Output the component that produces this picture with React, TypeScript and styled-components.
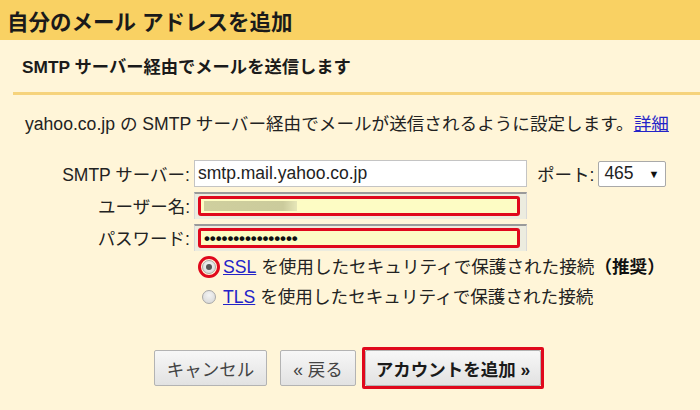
import React from "react";
import styled, { createGlobalStyle } from "styled-components";

const Global = createGlobalStyle`
  html, body { margin: 0; padding: 0; }
  body {
    width: 700px;
    height: 410px;
    overflow: hidden;
    background: #fff5d8;
    font-family: "Liberation Sans", Arial, "Noto Sans CJK JP", sans-serif;
    color: #222;
  }
`;

const Page = styled.div`
  width: 700px;
  height: 410px;
  display: flex;
  flex-direction: column;
  background: #fff5d8;
`;

const TitleBar = styled.div`
  height: 40px;
  background: #f9d163;
  display: flex;
  align-items: center;
  padding-left: 7px;
  font-size: 21.5px;
  font-weight: bold;
  color: #1a1a1a;
`;

const Section = styled.div`
  margin-left: 13px;
  height: 50px;
  border-bottom: 3px solid #f6d37c;
  display: flex;
  align-items: center;
  padding-left: 9px;
  padding-bottom: 2px;
  font-size: 17.3px;
  font-weight: bold;
  color: #1a1a1a;
`;

const Intro = styled.p`
  margin: 19px 0 0 25px;
  font-size: 17.6px;
  line-height: 20px;
  color: #222;
`;

const Link = styled.a`
  color: #2323c8;
  text-decoration: underline;
  cursor: pointer;
`;

const Form = styled.div`
  margin: 26px 0 0 25px;
  display: grid;
  grid-template-columns: 165px 333px auto;
  column-gap: 4px;
  row-gap: 5px;
  align-items: center;
`;

const Label = styled.label`
  text-align: right;
  font-size: 17.5px;
  color: #222;
  white-space: nowrap;
`;

const TextBox = styled.div`
  box-sizing: border-box;
  height: 27px;
  background: #fff;
  border: 1px solid #c4c4c4;
  display: flex;
  align-items: center;
  padding-left: 3px;
  font-size: 17.5px;
  color: #222;
`;

const FilledBox = styled.div`
  box-sizing: border-box;
  height: 27px;
  background: #ececdf;
  border-top: 2px solid #9a9a9a;
  border-left: 1px solid #d8d8d8;
  border-right: 1px solid #d8d8d8;
  padding: 2px 6px 3px 3px;
  display: flex;
`;

const Marked = styled.div`
  flex: 1;
  box-sizing: border-box;
  border: 3px solid #e0081c;
  border-radius: 3px;
  background: #fdfcc4;
  display: flex;
  align-items: center;
  padding-left: 3px;
`;

const Blurred = styled.span<{ $w: number }>`
  display: block;
  width: ${(p) => p.$w}px;
  height: 10px;
  background: linear-gradient(90deg, #cfcf9e, #cbcb9c 85%, #e6e6b8);
  filter: blur(0.4px);
`;

const Dots = styled.span`
  font-size: 17px;
  font-weight: bold;
  letter-spacing: -0.1px;
  color: #111;
  line-height: 1;
`;

const Port = styled.div`
  display: flex;
  align-items: center;
  gap: 4px;
  margin-left: 6px;
  font-size: 17.5px;
  color: #222;
`;

const Select = styled.div`
  box-sizing: border-box;
  height: 26px;
  width: 68px;
  border: 1px solid #a9a9a9;
  border-radius: 2px;
  background: #fff;
  display: flex;
  align-items: center;
  justify-content: space-between;
  padding: 0 6px 0 5px;
  font-size: 17.5px;
  color: #222;
`;

const Caret = styled.span`
  font-size: 11px;
  color: #111;
`;

const Options = styled.div`
  grid-column: 2 / 4;
  margin-top: 0;
  display: flex;
  flex-direction: column;
  gap: 8px;
`;

const Option = styled.div`
  height: 22px;
  line-height: 22px;
  display: flex;
  align-items: center;
  font-size: 17.6px;
  color: #222;
  white-space: nowrap;
`;

const RadioSlot = styled.span<{ $ring?: boolean }>`
  box-sizing: border-box;
  width: 22px;
  height: 22px;
  margin: 0 3px 0 4px;
  border-radius: 50%;
  border: 3px solid ${(p) => (p.$ring ? "#e0081c" : "transparent")};
  display: flex;
  align-items: center;
  justify-content: center;
`;

const Radio = styled.span<{ $on?: boolean }>`
  box-sizing: border-box;
  width: 14px;
  height: 14px;
  border-radius: 50%;
  border: 1px solid #a8a8a8;
  background: radial-gradient(circle at 50% 35%, #f4f4f4, #d4d4d4);
  display: flex;
  align-items: center;
  justify-content: center;
  &::after {
    content: "";
    display: ${(p) => (p.$on ? "block" : "none")};
    width: 6px;
    height: 6px;
    border-radius: 50%;
    background: #555;
  }
`;

const Strong = styled.b`
  font-weight: bold;
  color: #111;
`;

const Buttons = styled.div`
  margin-top: 39px;
  display: flex;
  justify-content: center;
  align-items: center;
  padding-right: 2px;
`;

const Button = styled.button<{ $primary?: boolean }>`
  box-sizing: border-box;
  height: 36px;
  padding: 0 ${(p) => (p.$primary ? "10px" : "12px")};
  border: 1px solid #b3b3b3;
  border-radius: 2px;
  background: linear-gradient(#f7f7f7, #e2e2e2);
  font-family: inherit;
  font-size: 17.5px;
  font-weight: ${(p) => (p.$primary ? "bold" : "normal")};
  color: ${(p) => (p.$primary ? "#1a1a1a" : "#444")};
  cursor: pointer;
`;

const Highlight = styled.span`
  display: inline-flex;
  border: 3px solid #e0081c;
  border-radius: 2px;
  margin-left: 6px;
`;

const Spacer = styled.span<{ $w: number }>`
  display: inline-block;
  width: ${(p) => p.$w}px;
`;

export default function App() {
  return (
    <Page>
      <Global />
      <TitleBar>自分のメール アドレスを追加</TitleBar>
      <Section>SMTP サーバー経由でメールを送信します</Section>
      <Intro>
        yahoo.co.jp の SMTP サーバー経由でメールが送信されるように設定します。
        <Link>詳細</Link>
      </Intro>
      <Form>
        <Label>SMTP サーバー:</Label>
        <TextBox>smtp.mail.yahoo.co.jp</TextBox>
        <Port>
          ポート:
          <Select>
            465 <Caret>▼</Caret>
          </Select>
        </Port>

        <Label>ユーザー名:</Label>
        <FilledBox>
          <Marked>
            <Blurred $w={93} />
          </Marked>
        </FilledBox>
        <span />

        <Label>パスワード:</Label>
        <FilledBox>
          <Marked>
            <Dots>••••••••••••••••</Dots>
          </Marked>
        </FilledBox>
        <span />

        <Options>
          <Option>
            <RadioSlot $ring>
              <Radio $on />
            </RadioSlot>
            <Link>SSL</Link>&nbsp;を使用したセキュリティで保護された接続
            <Strong>（推奨）</Strong>
          </Option>
          <Option>
            <RadioSlot>
              <Radio />
            </RadioSlot>
            <Link>TLS</Link>&nbsp;を使用したセキュリティで保護された接続
          </Option>
        </Options>
      </Form>
      <Buttons>
        <Button>キャンセル</Button>
        <Spacer $w={13} />
        <Button>« 戻る</Button>
        <Highlight>
          <Button $primary>アカウントを追加 »</Button>
        </Highlight>
      </Buttons>
    </Page>
  );
}
